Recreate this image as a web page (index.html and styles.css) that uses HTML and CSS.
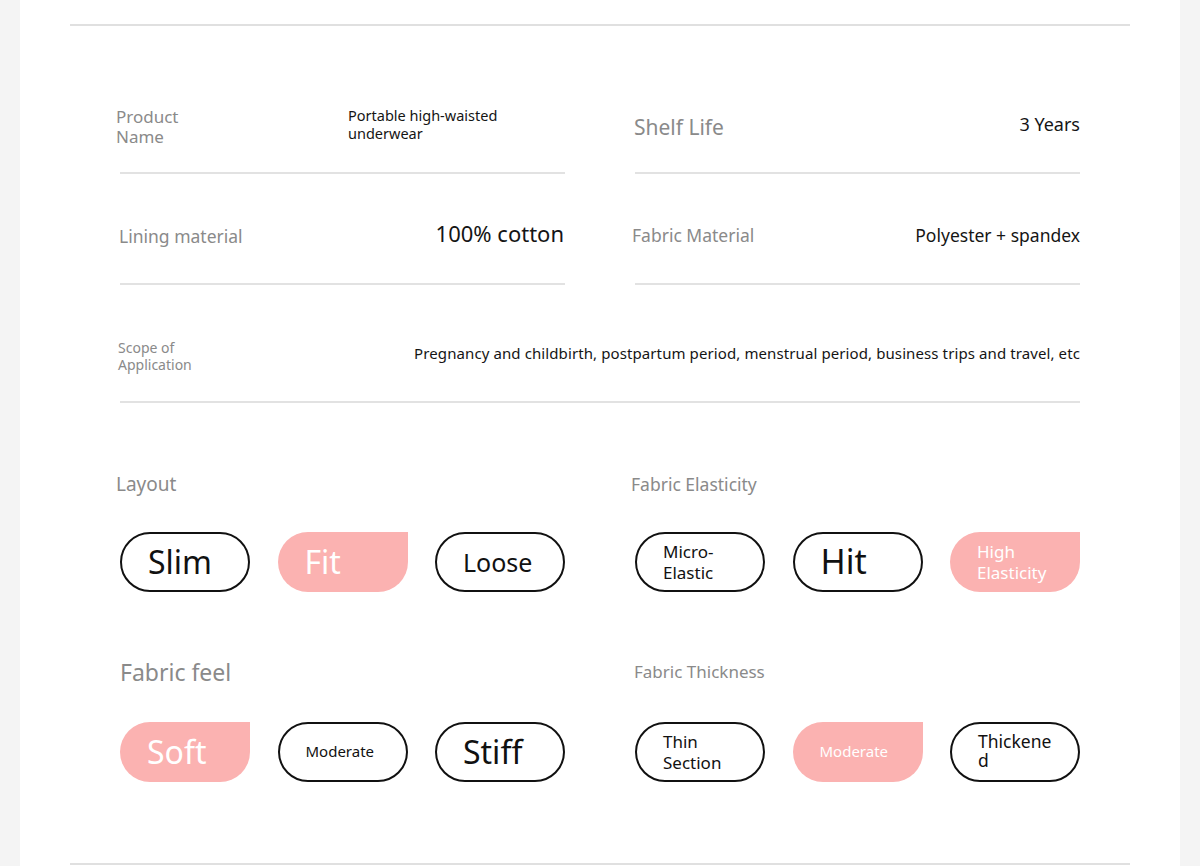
FILE: index.html
```html
<!DOCTYPE html>
<html lang="en">
<head>
  <meta charset="UTF-8" />
  <meta name="viewport" content="width=device-width, initial-scale=1.0" />
  <title>Product Details</title>
  <link rel="stylesheet" href="styles.css">
</head>
<body>
  <div class="page">
    <div class="rule"></div>

    <div class="specs">
      <div class="spec-row row-1">
        <div class="cell">
          <span class="label label-name">Product Name</span>
          <span class="value value-name">Portable high-waisted underwear</span>
        </div>
        <div class="cell">
          <span class="label label-shelf">Shelf Life</span>
          <span class="value value-years">3 Years</span>
        </div>
      </div>

      <div class="spec-row row-2">
        <div class="cell">
          <span class="label label-lining">Lining material</span>
          <span class="value value-cotton">100% cotton</span>
        </div>
        <div class="cell">
          <span class="label label-fabric">Fabric Material</span>
          <span class="value value-poly">Polyester + spandex</span>
        </div>
      </div>

      <div class="spec-row row-3">
        <div class="cell cell-wide">
          <span class="label label-scope">Scope of Application</span>
          <span class="value value-scope">Pregnancy and childbirth, postpartum period, menstrual period, business trips and travel, etc</span>
        </div>
      </div>
    </div>

    <div class="options">
      <div class="group">
        <div class="group-title t-layout">Layout</div>
        <div class="pills">
          <div class="pill big">Slim</div>
          <div class="pill on big">Fit</div>
          <div class="pill mid">Loose</div>
        </div>
      </div>

      <div class="group">
        <div class="group-title t-elastic">Fabric Elasticity</div>
        <div class="pills">
          <div class="pill small">Micro-<br>Elastic</div>
          <div class="pill huge">Hit</div>
          <div class="pill on small">High<br>Elasticity</div>
        </div>
      </div>

      <div class="group">
        <div class="group-title t-feel">Fabric feel</div>
        <div class="pills">
          <div class="pill on big">Soft</div>
          <div class="pill tiny">Moderate</div>
          <div class="pill big">Stiff</div>
        </div>
      </div>

      <div class="group">
        <div class="group-title t-thick">Fabric Thickness</div>
        <div class="pills">
          <div class="pill small">Thin<br>Section</div>
          <div class="pill on tiny">Moderate</div>
          <div class="pill small narrow">Thickened</div>
        </div>
      </div>
    </div>

    <div class="rule bottom"></div>
  </div>
</body>
</html>
```

FILE: styles.css
```css
body {
  margin: 0;
  padding: 0;
  background: #f4f4f4;
  font-family: "Noto Sans", "Open Sans", Arial, sans-serif;
  color: #151515;
}

.page {
  margin: 0 20px;
  height: 866px;
  background: #fff;
  padding: 24px 50px 0;
  box-sizing: border-box;
  overflow: hidden;
}

.rule {
  height: 2px;
  background: #e0e0e0;
}

.rule.bottom {
  margin-top: 81px;
}

.specs {
  padding: 0 50px;
}

.spec-row {
  display: grid;
  grid-template-columns: 1fr 1fr;
  column-gap: 70px;
}

.row-1 {
  margin-top: 56px;
}

.row-2 {
  margin-top: 19px;
}

.row-3 {
  margin-top: 26px;
  grid-template-columns: 1fr;
}

.cell {
  height: 90px;
  display: flex;
  align-items: center;
  justify-content: space-between;
  border-bottom: 2px solid #e2e2e2;
}

.label {
  color: #8a8a8a;
  line-height: 1.2;
}

.value {
  line-height: 1.2;
}

.label-name {
  font-size: 17px;
  width: 80px;
  margin-left: -4px;
}

.value-name {
  font-size: 14.5px;
  width: 170px;
  margin-right: 47px;
  margin-top: -5px;
}

.label-shelf {
  font-size: 21px;
  margin-left: -1px;
  margin-top: 2px;
}

.value-years {
  font-size: 18px;
  margin-top: -4px;
}

.label-lining {
  font-size: 17.5px;
  margin-left: -1px;
  margin-top: -4px;
}

.value-cotton {
  font-size: 22px;
  margin-right: 1px;
  margin-top: -10px;
}

.label-fabric {
  font-size: 17.5px;
  margin-left: -3px;
  margin-top: -6px;
}

.value-poly {
  font-size: 17.5px;
  margin-top: -6px;
}

.label-scope {
  font-size: 14px;
  width: 100px;
  margin-left: -2px;
  margin-top: 1px;
}

.value-scope {
  font-size: 15px;
  letter-spacing: 0.1px;
  white-space: nowrap;
  margin-top: -7px;
}

.options {
  display: grid;
  grid-template-columns: 1fr 1fr;
  column-gap: 70px;
  row-gap: 65px;
  padding: 0 50px;
  margin-top: 66px;
}

.group-title {
  color: #8a8a8a;
  height: 30px;
  line-height: 30px;
  margin-bottom: 33px;
}

.t-layout {
  font-size: 19px;
  margin-left: -4px;
}

.t-elastic {
  font-size: 17.5px;
  margin-left: -4px;
}

.t-feel {
  font-size: 23px;
  margin-bottom: 35px;
}

.t-thick {
  font-size: 17px;
  margin-left: -1px;
  margin-bottom: 35px;
}

.pills {
  display: flex;
  justify-content: space-between;
}

.pill {
  width: 130px;
  height: 60px;
  box-sizing: border-box;
  border: 2px solid #111;
  border-radius: 30px;
  display: flex;
  align-items: center;
  padding-left: 26px;
  line-height: 1.15;
  color: #111;
}

.pill.on {
  border: none;
  padding-left: 27px;
  background: #fbb2b1;
  color: #fff;
  border-radius: 30px 0 30px 30px;
}

.pill.big {
  font-size: 32px;
}

.pill.huge {
  font-size: 34px;
}

.pill.mid {
  font-size: 25px;
}

.pill.small {
  font-size: 17px;
  line-height: 21px;
}

.pill.tiny {
  font-size: 15px;
}

.pill.narrow {
  font-size: 17.5px;
  padding-right: 22px;
  word-break: break-all;
  line-height: 19px;
  align-items: flex-start;
  padding-top: 8px;
}
```
